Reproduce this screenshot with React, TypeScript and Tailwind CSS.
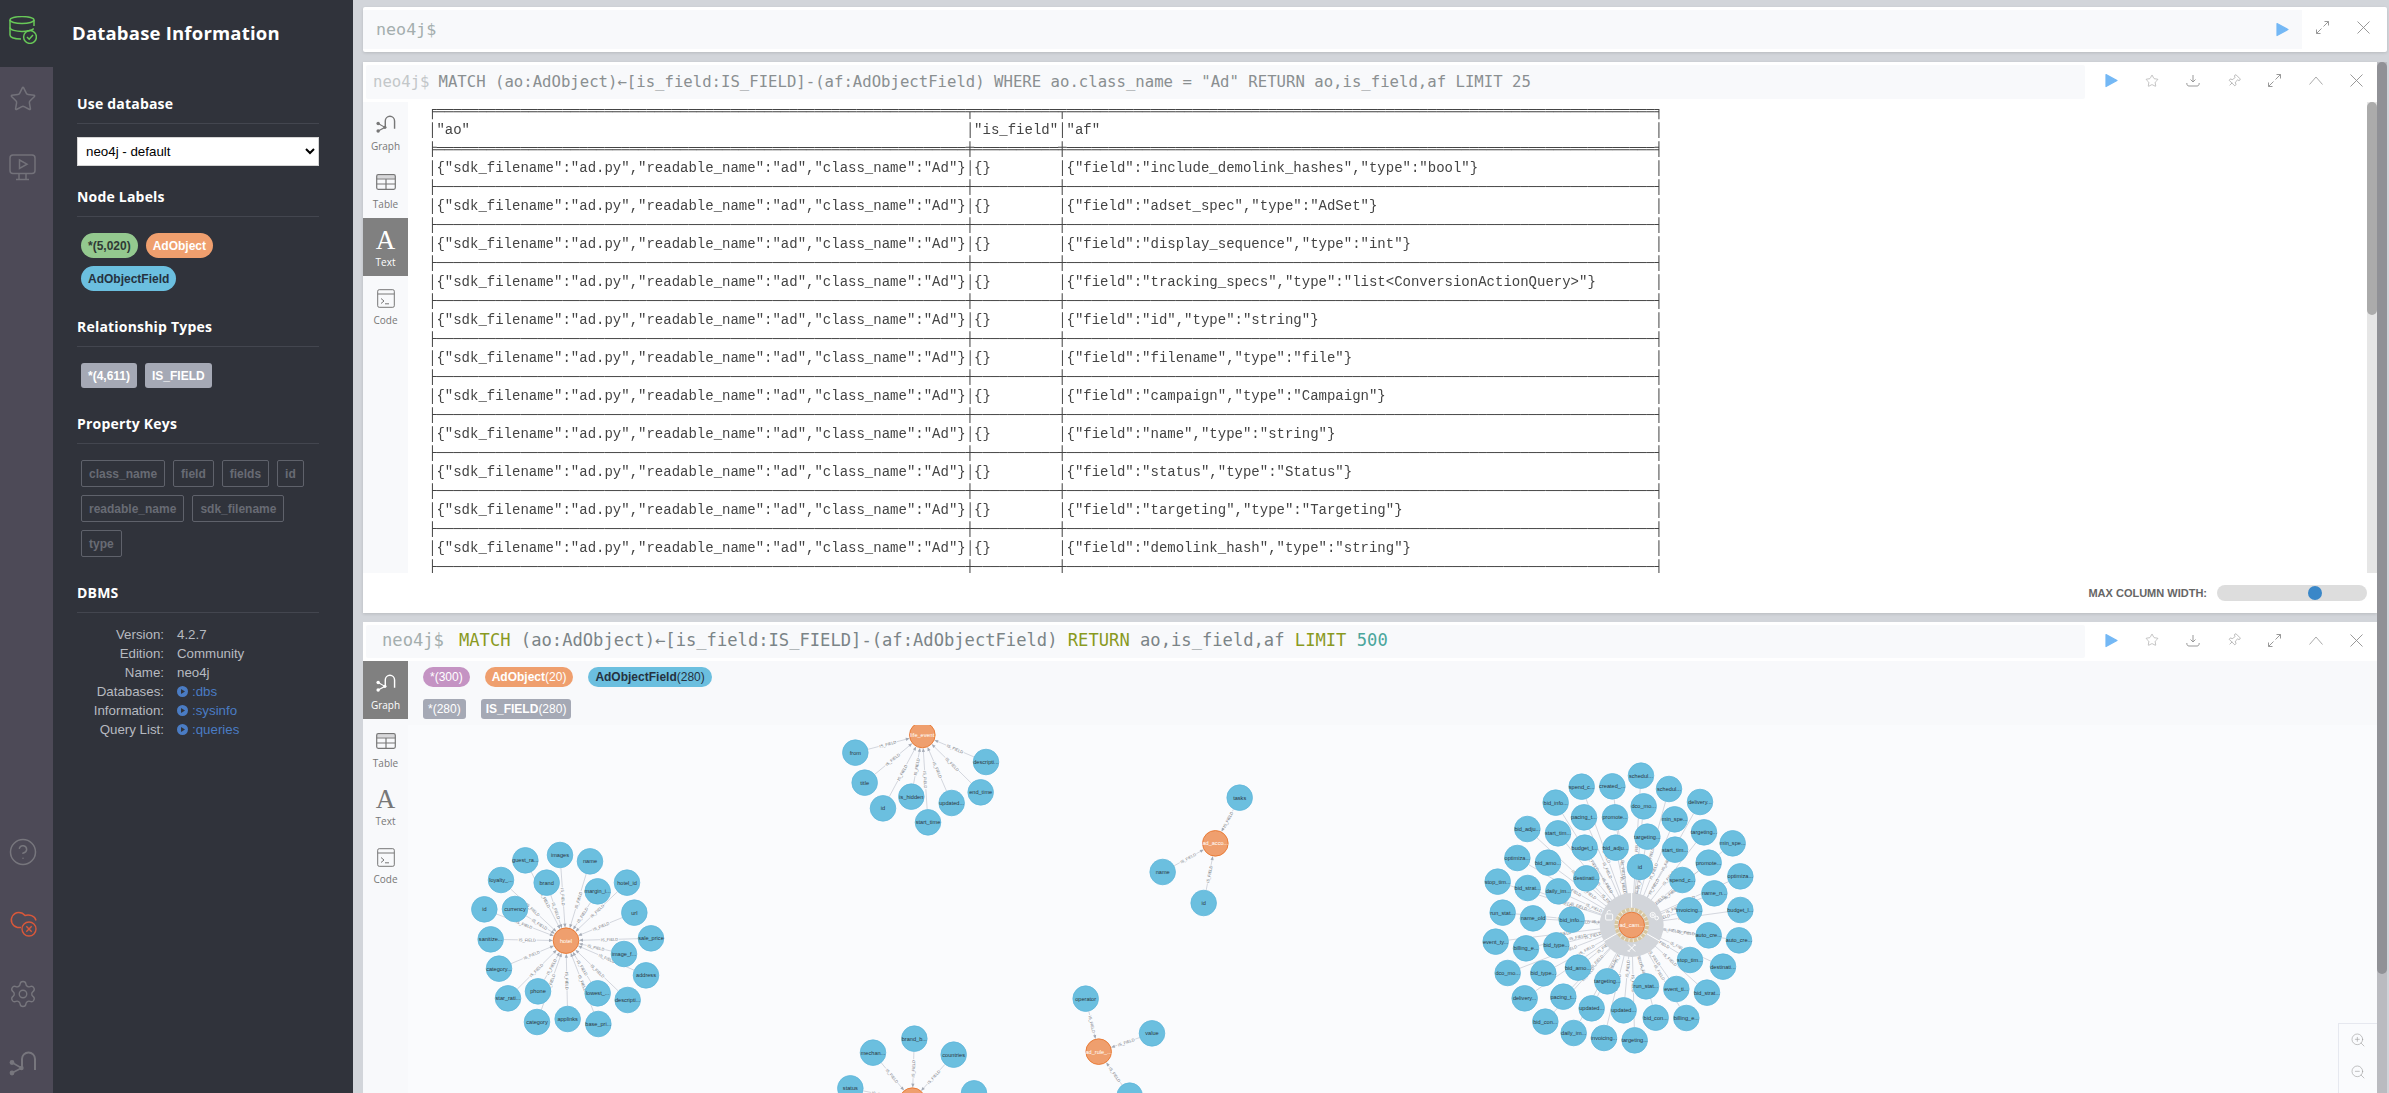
import React from "react";
import { Star, Settings, CircleHelp, ZoomIn, ZoomOut, Pin } from "lucide-react";

const pad = (s: string, n: number) => s + " ".repeat(Math.max(0, n - s.length));
const rep = (c: string, n: number) => c.repeat(n);
const border = (l: string, f: string, m: string, r: string) =>
  l + rep(f, 63) + m + rep(f, 10) + m + rep(f, 70) + r;
const row = (a: string, b: string, c: string) => "│" + pad(a, 63) + "│" + pad(b, 10) + "│" + pad(c, 70) + "│";
const AO = '{"sdk_filename":"ad.py","readable_name":"ad","class_name":"Ad"}';
const FIELDS = [
  ["include_demolink_hashes", "bool"],
  ["adset_spec", "AdSet"],
  ["display_sequence", "int"],
  ["tracking_specs", "list<ConversionActionQuery>"],
  ["id", "string"],
  ["filename", "file"],
  ["campaign", "Campaign"],
  ["name", "string"],
  ["status", "Status"],
  ["targeting", "Targeting"],
  ["demolink_hash", "string"],
];
const TABLE = [
  border("╒", "═", "╤", "╕"),
  row('"ao"', '"is_field"', '"af"'),
  border("╞", "═", "╪", "╡"),
  ...FIELDS.flatMap(([f, t]) => [
    row(AO, "{}", `{"field":"${f}","type":"${t}"}`),
    border("├", "─", "┼", "┤"),
  ]),
].join("\n");

type N = [number, number, string];
type Cluster = { ox: number; oy: number; c: [number, number, string]; nodes: N[]; selected?: boolean };

const CLUSTERS: Cluster[] = [
  {
    ox: 440, oy: 820, c: [378, 362, "hotel"],
    nodes: [
      [360, 105, "images"], [450, 124, "name"], [256, 121, "guest_ra..."], [320, 188, "brand"],
      [183, 180, "loyalty_..."], [473, 214, "margin_i..."], [561, 188, "hotel_id"], [583, 278, "url"],
      [133, 268, "id"], [225, 267, "currency"], [633, 355, "sale_price"], [152, 358, "sanitize..."],
      [552, 402, "image_f..."], [618, 466, "address"], [177, 446, "category..."], [204, 535, "star_rati..."],
      [294, 514, "phone"], [473, 520, "lowest_..."], [563, 540, "descripti..."], [291, 606, "category"],
      [383, 597, "applinks"], [475, 612, "base_pri..."],
    ],
  },
  {
    ox: 800, oy: 720, c: [367, 45, "life_event"],
    nodes: [
      [166, 98, "from"], [194, 188, "title"], [249, 265, "id"], [334, 230, "is_hidden"],
      [384, 307, "start_time"], [455, 249, "updated..."], [542, 217, "end_time"], [558, 126, "descripti..."],
    ],
  },
  {
    ox: 800, oy: 720, c: [1246, 370, "ad_acco..."],
    nodes: [[1319, 233, "tasks"], [1088, 456, "name"], [1211, 549, "id"]],
  },
  {
    ox: 800, oy: 720, c: [896, 995, "ad_rule_..."],
    nodes: [[857, 836, "operator"], [1056, 940, "value"], [989, 1127, ""]],
  },
  {
    ox: 780, oy: 960, c: [397, 422, ""],
    nodes: [[403, 236, "brand_b..."], [279, 278, "mechan..."], [521, 284, "countries"], [211, 385, "status"], [582, 400, ""]],
  },
  {
    ox: 1460, oy: 740, c: [515, 555, "ad_cam..."], selected: true,
    nodes: [
      [543, 107, "schedul..."], [627, 147, "schedul..."], [457, 139, "created_..."], [365, 140, "spend_c..."],
      [720, 186, "delivery..."], [287, 188, "bid_info..."], [551, 199, "dco_mo..."], [644, 238, "min_spe..."],
      [372, 232, "pacing_t..."], [465, 232, "promote..."], [202, 267, "bid_adju..."], [294, 280, "start_tim..."],
      [732, 277, "targeting..."], [562, 290, "targeting..."], [818, 310, "min_spe..."], [374, 323, "budget_l..."],
      [467, 323, "bid_adju..."], [645, 329, "start_tim..."], [172, 354, "optimiza..."], [264, 368, "bid_amo..."],
      [746, 368, "promote..."], [540, 381, "id"], [379, 415, "destinati..."], [841, 409, "optimiza..."],
      [667, 420, "spend_c..."], [113, 425, "stop_tim..."], [203, 444, "bid_strat..."], [295, 454, "daily_im..."],
      [763, 460, "name_n..."], [841, 510, "budget_l..."], [688, 511, "invoicing..."], [128, 518, "run_stat..."],
      [219, 535, "name_old"], [335, 539, "bid_info..."], [746, 586, "auto_cre..."], [837, 601, "auto_cre..."],
      [107, 605, "event_ty..."], [198, 625, "billing_e..."], [289, 616, "bid_type..."], [690, 660, "stop_tim..."],
      [789, 680, "destinati..."], [143, 699, "dco_mo..."], [250, 700, "bid_type..."], [354, 683, "bid_amo..."],
      [442, 724, "targeting..."], [558, 739, "run_stat..."], [649, 747, "event_ti..."], [741, 758, "bid_strat..."],
      [194, 775, "delivery..."], [310, 770, "pacing_t..."], [395, 805, "updated..."], [491, 811, "updated..."],
      [587, 833, "bid_con..."], [679, 834, "billing_e..."], [256, 845, "bid_con..."], [341, 879, "daily_im..."],
      [432, 894, "invoicing..."], [524, 901, "targeting..."],
    ],
  },
];

function Edge({ x, y, cx, cy }: { x: number; y: number; cx: number; cy: number }) {
  const dx = cx - x;
  const dy = cy - y;
  const len = Math.hypot(dx, dy);
  const ux = dx / len;
  const uy = dy / len;
  const sx = x + ux * 13;
  const sy = y + uy * 13;
  const ex = cx - ux * 15;
  const ey = cy - uy * 15;
  const mx = (sx + ex) / 2;
  const my = (sy + ey) / 2;
  const gap = 9.5;
  let a = (Math.atan2(dy, dx) * 180) / Math.PI;
  if (a > 90 || a < -90) a += 180;
  const tip = `${ex + ux * 2},${ey + uy * 2} ${ex - ux * 2 - uy * 1.6},${ey - uy * 2 + ux * 1.6} ${ex - ux * 2 + uy * 1.6},${ey - uy * 2 - ux * 1.6}`;
  return (
    <g>
      <line x1={sx} y1={sy} x2={mx - ux * gap} y2={my - uy * gap} stroke="#c2c6d0" strokeWidth={0.7} />
      <line x1={mx + ux * gap} y1={my + uy * gap} x2={ex} y2={ey} stroke="#c2c6d0" strokeWidth={0.7} />
      <polygon points={tip} fill="#a5abb6" />
      <text
        x={mx}
        y={my}
        textAnchor="middle"
        dominantBaseline="central"
        fontSize={4}
        fill="#6f7278"
        fontFamily="'Liberation Sans', sans-serif"
        transform={`rotate(${a} ${mx} ${my})`}
      >
        IS_FIELD
      </text>
    </g>
  );
}

function Ring({ x, y }: { x: number; y: number }) {
  return (
    <g>
      <circle cx={x} cy={y} r={32} fill="#d2d5da" />
      {[-90, 30, 150].map((a) => (
        <line
          key={a}
          x1={x + Math.cos((a * Math.PI) / 180) * 17}
          y1={y + Math.sin((a * Math.PI) / 180) * 17}
          x2={x + Math.cos((a * Math.PI) / 180) * 32}
          y2={y + Math.sin((a * Math.PI) / 180) * 32}
          stroke="#ffffff"
          strokeWidth={1}
        />
      ))}
      <circle cx={x} cy={y} r={15.5} fill="none" stroke="#d8c79f" strokeWidth={3.4} />
      <circle cx={x} cy={y} r={15.5} fill="none" stroke="#f4efe2" strokeWidth={3.4} strokeDasharray="1 3.4" />
      <g transform={`translate(${x - 27} ${y - 15})`} fill="none" stroke="#ffffff" strokeWidth={0.9}>
        <rect x={1} y={4} width={7} height={6} rx={1} />
        <path d="M2.5 4 V2.2 a2 2 0 0 1 3.6 -1" />
      </g>
      <g transform={`translate(${x + 17} ${y - 14})`} fill="none" stroke="#ffffff" strokeWidth={0.9}>
        <circle cx={4} cy={4} r={2.6} />
        <circle cx={8} cy={7} r={1.8} />
        <circle cx={4} cy={4} r={0.9} />
      </g>
      <g transform={`translate(${x - 4} ${y + 19})`} fill="none" stroke="#ffffff" strokeWidth={1}>
        <path d="M0.5 0.5 L7.5 7.5 M7.5 0.5 L0.5 7.5 M0 6 L2 8 M6 0 L8 2" />
      </g>
    </g>
  );
}

function Graph() {
  const converted = CLUSTERS.map((cl) => ({
    ...cl,
    cx: cl.ox + cl.c[0] / 3,
    cy: cl.oy + cl.c[1] / 3,
    pts: cl.nodes.map((n) => ({ x: cl.ox + n[0] / 3, y: cl.oy + n[1] / 3, t: n[2] })),
  }));
  const font = "'Liberation Sans', sans-serif";
  return (
    <svg className="absolute inset-0 h-full w-full" viewBox="0 0 1969 368">
      <g transform="translate(-408 -725)">
        {converted.map((cl, i) => (
          <g key={i}>
            {cl.pts.map((p, j) => (
              <Edge key={j} x={p.x} y={p.y} cx={cl.cx} cy={cl.cy} />
            ))}
            {cl.selected && <Ring x={cl.cx} y={cl.cy} />}
            {cl.pts.map((p, j) => (
              <g key={j}>
                <circle cx={p.x} cy={p.y} r={12.8} fill="#6bbfdf" stroke="#5fb6da" strokeWidth={0.8} />
                {p.t && (
                  <text x={p.x} y={p.y} textAnchor="middle" dominantBaseline="central" fontSize={5.6} fill="#2b3640" fontFamily={font}>
                    {p.t}
                  </text>
                )}
              </g>
            ))}
            <circle cx={cl.cx} cy={cl.cy} r={12.8} fill="#ef9f6e" stroke="#e8762f" strokeWidth={0.9} />
            {cl.c[2] && (
              <text x={cl.cx} y={cl.cy} textAnchor="middle" dominantBaseline="central" fontSize={5.6} fill="#ffffff" fontFamily={font}>
                {cl.c[2]}
              </text>
            )}
          </g>
        ))}
      </g>
    </svg>
  );
}

function NeoIcon({ className }: { className?: string }) {
  return (
    <svg viewBox="0 0 28 26" className={className} fill="none" stroke="currentColor">
      <path d="M13 17 V8 a6.5 6.5 0 0 1 13 0 V19" strokeWidth={2} />
      <path d="M3 11.5 L12.5 17 L3 22" strokeWidth={1.6} />
      <circle cx={3} cy={11.5} r={2.4} fill="currentColor" stroke="none" />
      <circle cx={3} cy={22} r={2.4} fill="currentColor" stroke="none" />
      <circle cx={12.5} cy={17} r={2.2} fill="currentColor" stroke="none" />
    </svg>
  );
}

function DbIcon() {
  return (
    <svg viewBox="0 0 28 28" className="h-[28px] w-[28px]" fill="none" stroke="#68c858" strokeWidth={1.5}>
      <ellipse cx={13} cy={4} rx={12} ry={3.4} />
      <path d="M1 4 V19 C1 21.5 6 23 12 23" />
      <path d="M1 11.5 C1 14 7 15.4 13 15.4 C17 15.4 22 14.6 24.8 12.6" />
      <path d="M25 4 V10" />
      <circle cx={21} cy={21} r={6.4} />
      <path d="M18 21 L20.2 23.2 L24 19" />
    </svg>
  );
}

function MonitorPlay() {
  return (
    <svg viewBox="0 0 28 28" className="h-[28px] w-[28px]" fill="none" stroke="#73727a" strokeWidth={1.5}>
      <rect x={1} y={1} width={25} height={18.5} rx={3} />
      <path d="M10.5 6 L18 10.2 L10.5 14.5 Z" />
      <path d="M10 19.5 V25 M17 19.5 V25 M7 25.5 H20" />
    </svg>
  );
}

function CloudErr() {
  return (
    <svg viewBox="0 0 28 28" className="h-[28px] w-[28px]" fill="none" stroke="#d9583a" strokeWidth={1.4}>
      <path d="M12 18.5 H8.5 A7.6 7.6 0 1 1 16 6.5 C20 5.2 26 6.5 27 11.5" />
      <circle cx={20} cy={20} r={7} />
      <path d="M17.3 17.3 L22.7 22.7 M22.7 17.3 L17.3 22.7" />
    </svg>
  );
}

function Play() {
  return (
    <svg viewBox="0 0 13 15" className="h-[15px] w-[13px]">
      <path d="M1 1.5 L12 7.5 L1 13.5 Z" fill="#74b8f5" stroke="#74b8f5" strokeWidth={1.2} strokeLinejoin="round" />
    </svg>
  );
}

function Expand() {
  return (
    <svg viewBox="0 0 13 13" className="h-[13px] w-[13px]" fill="none" stroke="#999999" strokeWidth={1}>
      <path d="M7.5 5.5 L12.5 0.5 M8.5 0.5 H12.5 V4.5 M5.5 7.5 L0.5 12.5 M0.5 8.5 V12.5 H4.5" />
    </svg>
  );
}

function Close() {
  return (
    <svg viewBox="0 0 13 13" className="h-[13px] w-[13px]" fill="none" stroke="#8f8f8f" strokeWidth={0.9}>
      <path d="M0.5 0.5 L12.5 12.5 M12.5 0.5 L0.5 12.5" />
    </svg>
  );
}

function Actions() {
  return (
    <div className="flex w-[286px] shrink-0 items-center pb-[3px]">
      <div className="flex w-[41px] justify-center"><Play /></div>
      <div className="flex w-[41px] justify-center"><Star size={14} strokeWidth={1} color="#9a9a9a" /></div>
      <div className="flex w-[41px] justify-center">
        <svg viewBox="0 0 14 13" className="h-[13px] w-[14px]" fill="none" stroke="#999999" strokeWidth={1}>
          <path d="M7 1 V7.5 M4.5 5.5 L7 8 L9.5 5.5" />
          <path d="M0.8 9 C0.8 11 1.5 12 3 12 H11 C12.5 12 13.2 11 13.2 9" />
        </svg>
      </div>
      <div className="flex w-[41px] justify-center"><Pin size={14} strokeWidth={1} color="#8f8f8f" className="rotate-45" /></div>
      <div className="flex w-[41px] justify-center"><Expand /></div>
      <div className="flex w-[41px] justify-center">
        <svg viewBox="0 0 14 9" className="h-[9px] w-[14px]" fill="none" stroke="#a0a0a0" strokeWidth={0.9}>
          <path d="M0.5 8.5 L7 1 L13.5 8.5" />
        </svg>
      </div>
      <div className="flex w-[41px] justify-center"><Close /></div>
    </div>
  );
}

function SectionTitle({ children, className }: { children: React.ReactNode; className?: string }) {
  return (
    <div className={`h-[31px] border-b border-[#43464f] font-['Open_Sans',sans-serif] text-[14px] font-bold leading-[22px] tracking-[0.2px] text-white ${className ?? ""}`}>
      {children}
    </div>
  );
}

function TabColumn({ active, fill }: { active: string; fill?: boolean }) {
  const base = "flex h-[58px] flex-col items-center";
  const tabs = ["Graph", "Table", "Text", "Code"];
  return (
    <div className={`flex w-[45px] shrink-0 flex-col bg-[#f8f9fb] ${fill ? "h-full" : "h-[471px]"}`}>
      {tabs.map((t) => {
        const on = t === active;
        const color = on ? "text-white" : "text-[#777777]";
        const bg = on ? "bg-[#808080]" : "";
        return (
          <div key={t} className={`${base} ${bg} ${color}`}>
            <div className="flex h-[38px] items-center justify-center pt-[6px]">
              {t === "Graph" && <NeoIcon className="h-[19px] w-[20px]" />}
              {t === "Table" && (
                <svg viewBox="0 0 20 16" className="h-[16px] w-[20px]" fill="none" stroke="currentColor" strokeWidth={1.2}>
                  <rect x={0.7} y={0.7} width={18.6} height={14.6} rx={1.5} />
                  <path d="M0.7 5 H19.3 M0.7 10 H19.3 M10 5 V15.3" />
                  <path d="M0.7 3 H19.3" strokeWidth={3} opacity={0.25} />
                </svg>
              )}
              {t === "Text" && <span className="font-['Liberation_Serif',serif] text-[27px] leading-[27px]">A</span>}
              {t === "Code" && (
                <svg viewBox="0 0 18 19" className="h-[19px] w-[18px]" fill="none" stroke="currentColor" strokeWidth={1}>
                  <rect x={0.7} y={0.7} width={16.6} height={17.6} rx={1.5} />
                  <path d="M0.7 5 H17.3" />
                  <path d="M4 9.5 L7 12 L4 14.5 M8 14.8 H12" />
                </svg>
              )}
            </div>
            <div className="font-['Open_Sans',sans-serif] text-[10px] leading-[12px]">{t}</div>
          </div>
        );
      })}
    </div>
  );
}

function MainQuery({ muted }: { muted?: boolean }) {
  if (muted) {
    return (
      <div className="flex items-center whitespace-pre font-['DejaVu_Sans_Mono',monospace] text-[15.65px] leading-[20px]">
        <span className="pl-[7px] text-[#c3c7c9]">neo4j$</span>
        <span className="pl-[9px] text-[#8a8f91]">MATCH (ao:AdObject)←[is_field:IS_FIELD]-(af:AdObjectField) WHERE ao.class_name = "Ad" RETURN ao,is_field,af LIMIT 25</span>
      </div>
    );
  }
  return (
    <div className="flex items-center whitespace-pre pb-[3px] font-['DejaVu_Sans_Mono',monospace] text-[17.15px] leading-[20px] text-[#7b8487]">
      <span className="pl-[16px] text-[#a4aeae]">neo4j$</span>
      <span className="pl-[15px]">
        <span className="text-[#8a9a1f]">MATCH</span> (ao:AdObject)←[is_field:IS_FIELD]-(af:AdObjectField){" "}
        <span className="text-[#8a9a1f]">RETURN</span> ao,is_field,af{" "}
        <span className="text-[#8a9a1f]">LIMIT</span> <span className="text-[#4ba69c]">500</span>
      </span>
    </div>
  );
}

function GraphPill({ name, count, rel, cls }: { name: string; count: string; rel?: boolean; cls: string }) {
  return (
    <div className={`flex h-[20px] items-center font-['Liberation_Sans',sans-serif] text-[12px] ${rel ? "rounded-[3px] px-[5px]" : "rounded-full px-[7px]"} ${cls}`}>
      {name && <b className="font-bold">{name}</b>}
      <span>{count}</span>
    </div>
  );
}

export default function App() {
  const sans = "font-['Liberation_Sans',sans-serif]";
  return (
    <div className="flex h-[1093px] w-[2389px] overflow-hidden bg-[#d2d5da]">
      {/* icon rail */}
      <nav className="flex w-[53px] shrink-0 flex-col justify-between bg-[#4d4a57]">
        <div className="flex flex-col">
          <div className="flex h-[67px] w-full items-center justify-center bg-[#30333b] pb-[8px] pr-[7px]">
            <DbIcon />
          </div>
          <div className="flex flex-col items-center gap-[41px] pr-[7px] pt-[18px]">
            <Star size={28} strokeWidth={1.3} color="#73727a" />
            <MonitorPlay />
          </div>
        </div>
        <div className="flex flex-col items-center gap-[42px] pb-[16px] pr-[7px]">
          <CircleHelp size={30} strokeWidth={1.2} color="#77767d" />
          <CloudErr />
          <Settings size={30} strokeWidth={1.1} color="#77767d" />
          <NeoIcon className="h-[26px] w-[28px] text-[#77767d]" />
        </div>
      </nav>

      {/* sidebar */}
      <aside className="w-[300px] shrink-0 bg-[#30333b]">
        <h1 className="pl-[19px] pt-[19px] font-['Open_Sans',sans-serif] text-[18.5px] font-bold leading-[27px] tracking-[0.2px] text-white">
          Database Information
        </h1>
        <div className="pl-[24px] pr-[34px] pt-[47px]">
          <SectionTitle>Use database</SectionTitle>
          <select className={`mt-[13px] h-[29px] w-full border border-[#d5d5d5] bg-white pl-[4px] text-[13.33px] text-black ${sans}`} defaultValue="neo4j">
            <option value="neo4j">neo4j - default</option>
          </select>

          <SectionTitle className="mt-[20px]">Node Labels</SectionTitle>
          <div className={`mt-[16px] flex flex-wrap gap-[8px] pl-[4px] pr-[10px] text-[12px] font-bold ${sans}`}>
            <span className="flex h-[25px] items-center rounded-full bg-[#94c98f] px-[7px] text-[#2f3a35]">*(5,020)</span>
            <span className="flex h-[25px] items-center rounded-full bg-[#ef9f6e] px-[7px] text-white">AdObject</span>
            <span className="flex h-[25px] items-center rounded-full bg-[#6bbfdf] px-[7px] text-[#25323f]">AdObjectField</span>
          </div>

          <SectionTitle className="mt-[25px]">Relationship Types</SectionTitle>
          <div className={`mt-[16px] flex flex-wrap gap-[8px] pl-[4px] text-[12px] font-bold text-white ${sans}`}>
            <span className="flex h-[25px] items-center rounded-[3px] bg-[#a5a9b5] px-[7px]">*(4,611)</span>
            <span className="flex h-[25px] items-center rounded-[3px] bg-[#a5a9b5] px-[7px]">IS_FIELD</span>
          </div>

          <SectionTitle className="mt-[25px]">Property Keys</SectionTitle>
          <div className={`mt-[16px] flex flex-wrap gap-x-[8px] gap-y-[8px] pl-[4px] text-[12px] font-bold text-[#686b74] ${sans}`}>
            {["class_name", "field", "fields", "id", "readable_name", "sdk_filename", "type"].map((k) => (
              <span key={k} className="flex h-[27px] items-center rounded-[2px] border border-[#5f626b] px-[7px]">{k}</span>
            ))}
          </div>

          <SectionTitle className="mt-[25px]">DBMS</SectionTitle>
          <div className={`mt-[12px] grid grid-cols-[87px_1fr] gap-x-[13px] text-[13.3px] leading-[19px] text-[#b7bac0] ${sans}`}>
            <span className="text-right">Version:</span><span>4.2.7</span>
            <span className="text-right">Edition:</span><span>Community</span>
            <span className="text-right">Name:</span><span>neo4j</span>
            {[["Databases:", ":dbs"], ["Information:", ":sysinfo"], ["Query List:", ":queries"]].map(([l, v]) => (
              <React.Fragment key={l}>
                <span className="text-right">{l}</span>
                <span className="flex items-center gap-[4px] text-[#4a7cc4]">
                  <svg viewBox="0 0 11 11" className="h-[11px] w-[11px]">
                    <circle cx={5.5} cy={5.5} r={5.5} fill="#4a7cc4" />
                    <path d="M4 3 L8 5.5 L4 8 Z" fill="#30333b" />
                  </svg>
                  {v}
                </span>
              </React.Fragment>
            ))}
          </div>
        </div>
      </aside>

      {/* main */}
      <main className="flex min-w-0 flex-1 flex-col pl-[10px]">
        <div className="mt-[7px] flex h-[45px] w-[2024px] shrink-0 rounded-[2px] bg-white pb-[3px] pt-[3px] shadow-[0_1px_3px_rgba(0,0,0,0.12)]">
          <div className="flex flex-1 items-center justify-between bg-[#f8f9fb] pl-[13px] pr-[13px]">
            <span className="font-['DejaVu_Sans_Mono',monospace] text-[16.7px] text-[#a4aeae]">neo4j$</span>
            <Play />
          </div>
          <div className="flex w-[85px] items-center pb-[4px]">
            <div className="flex w-[41px] justify-center"><Expand /></div>
            <div className="flex w-[41px] justify-center"><Close /></div>
          </div>
        </div>

        <div className="mt-[10px] flex min-h-0 flex-1">
          <div className="flex w-[2014px] flex-col">
            {/* text frame */}
            <section className="flex h-[551px] shrink-0 flex-col bg-white shadow-[0_1px_3px_rgba(0,0,0,0.12)]">
              <header className="flex h-[40px] shrink-0 items-center py-[3px] pl-[3px]">
                <div className="mr-[6px] flex h-[34px] flex-1 items-center rounded-[2px] bg-[#f8f9fb]">
                  <MainQuery muted />
                </div>
                <Actions />
              </header>
              <div className="flex h-[471px] shrink-0">
                <TabColumn active="Text" />
                <pre className="h-full flex-1 overflow-hidden whitespace-pre pl-[20px] font-['Liberation_Mono',monospace] text-[14px] leading-[19px] text-[#444444] will-change-transform">{TABLE}</pre>
                <div className="h-full w-[10px] shrink-0 bg-[#e6e6e6]">
                  <div className="h-[213px] rounded-[5px] bg-[#ababab]" />
                </div>
              </div>
              <div className="flex h-[40px] shrink-0 items-center justify-end gap-[10px] pr-[10px]">
                <span className={`${sans} text-[11px] font-bold text-[#666666]`}>MAX COLUMN WIDTH:</span>
                <div className="flex h-[16px] w-[150px] items-center rounded-full bg-[#dddddd] pl-[91px]">
                  <div className="h-[14px] w-[14px] rounded-full bg-[#3a87c8]" />
                </div>
              </div>
            </section>

            {/* graph frame */}
            <section className="mt-[9px] flex min-h-0 flex-1 flex-col bg-white">
              <header className="flex h-[39px] shrink-0 items-center py-[3px] pl-[3px]">
                <div className="mr-[6px] flex h-[33px] flex-1 items-center rounded-[2px] bg-[#f8f9fb]">
                  <MainQuery />
                </div>
                <Actions />
              </header>
              <div className="flex min-h-0 flex-1">
                <TabColumn active="Graph" fill />
                <div className="flex min-w-0 flex-1 flex-col">
                  <div className="flex h-[64px] shrink-0 flex-col gap-[12px] bg-[#f8f9fb] pl-[15px] pt-[6px]">
                    <div className="flex gap-[15px]">
                      <GraphPill name="" count="*(300)" cls="bg-[#c493c3] text-white" />
                      <GraphPill name="AdObject" count="(20)" cls="bg-[#ef9f6e] text-white" />
                      <GraphPill name="AdObjectField" count="(280)" cls="bg-[#6bbfdf] text-[#25323f]" />
                    </div>
                    <div className="flex gap-[15px]">
                      <GraphPill name="" count="*(280)" rel cls="bg-[#a5a9b5] text-white" />
                      <GraphPill name="IS_FIELD" count="(280)" rel cls="bg-[#a5a9b5] text-white" />
                    </div>
                  </div>
                  <div className="relative min-h-0 flex-1 overflow-hidden bg-[#fafbfd]">
                    <Graph />
                    <div className="absolute bottom-0 right-0 flex h-[70px] w-[39px] flex-col items-center gap-[16px] border-l border-t border-[#e6e8ef] bg-[#fafbfd] pt-[8px]">
                      <ZoomIn size={16} strokeWidth={0.9} color="#9a9a9a" />
                      <ZoomOut size={16} strokeWidth={0.9} color="#9a9a9a" />
                    </div>
                  </div>
                </div>
              </div>
            </section>
          </div>
          {/* page scrollbar */}
          <div className="w-[10px] shrink-0 bg-[#babbc0]">
            <div className="h-[912px] rounded-[5px] bg-[#909196]" />
          </div>
        </div>
      </main>
    </div>
  );
}
